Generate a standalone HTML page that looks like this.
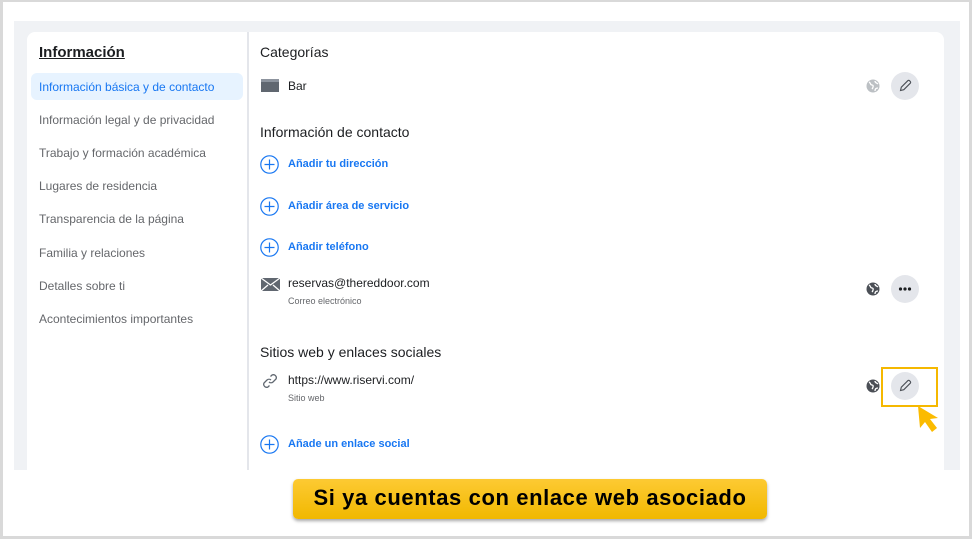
<!DOCTYPE html>
<html><head><meta charset="utf-8"><style>
*{margin:0;padding:0;box-sizing:border-box}
body{width:974px;height:542px;background:#fff;font-family:"Liberation Sans",Arial,sans-serif;position:relative;overflow:hidden}
.frame{position:absolute;left:0;top:0;width:972px;height:539px;border:3px solid #d9d9d9;border-top-width:2px}
.panel{position:absolute;left:14px;top:21px;width:946px;height:449px;background:#f0f2f5}
.card{position:absolute;left:27px;top:32px;width:917px;height:438px;background:#fff;border-radius:8px 8px 0 0}
.div{position:absolute;left:247px;top:32px;width:2px;height:438px;background:#e4e6eb}
.t{position:absolute;white-space:nowrap}
.side{font-size:12px;color:#65676b;left:39px}
.h{font-size:14px;color:#1c1e21}
.blue{font-size:11px;color:#1877f2;font-weight:bold;left:288px}
.plus{position:absolute;left:260px}
.btn{position:absolute;left:891px;width:28px;height:28px;border-radius:50%;background:#e4e6eb}
.globe{position:absolute;left:866px}
</style></head><body>
<div class="frame"></div>
<div class="panel"></div>
<div class="card"></div>
<div class="div"></div>
<div class="t" style="left:39px;top:44px;font-size:15px;font-weight:bold;color:#1c1e21;text-decoration:underline">Información</div>
<div style="position:absolute;left:31px;top:73px;width:212px;height:27px;background:#e7f3ff;border-radius:6px"></div>
<div class="t side" style="top:80px;color:#1877f2">Información básica y de contacto</div>
<div class="t side" style="top:113px">Información legal y de privacidad</div>
<div class="t side" style="top:146px">Trabajo y formación académica</div>
<div class="t side" style="top:179px">Lugares de residencia</div>
<div class="t side" style="top:212px">Transparencia de la página</div>
<div class="t side" style="top:246px">Familia y relaciones</div>
<div class="t side" style="top:279px">Detalles sobre ti</div>
<div class="t side" style="top:312px">Acontecimientos importantes</div>

<div class="t h" style="left:260px;top:44px">Categorías</div>
<div style="position:absolute;left:261px;top:79px;width:18px;height:13px;background:#606770;border-top:3px solid #8d949e"></div>
<div class="t" style="left:288px;top:79px;font-size:12px;color:#1c1e21">Bar</div>
<svg class="globe" style="top:79px" width="14" height="14" viewBox="0 0 14 14"><circle cx="7" cy="7" r="6.5" fill="#bcc0c4"/><path d="M3 3c2 1 1 3 3 3s1 3 0 4M9 2c0 2 2 2 3 3M9 12c0-2 1-3 3-3" stroke="#fff" stroke-width="1.3" fill="none"/></svg>
<div class="btn" style="top:72px"><svg width="28" height="28" viewBox="0 0 28 28"><path d="M9.5 18.5l.8-3.3 6.5-6.5a1.2 1.2 0 0 1 1.7 0l.8.8a1.2 1.2 0 0 1 0 1.7l-6.5 6.5z" fill="none" stroke="#4b4f56" stroke-width="1.1"/></svg></div>

<div class="t h" style="left:260px;top:124px">Información de contacto</div>
<svg class="plus" style="top:155px" width="19" height="19" viewBox="0 0 19 19"><circle cx="9.5" cy="9.5" r="8.7" fill="none" stroke="#1877f2" stroke-width="1.2"/><path d="M9.5 4.5v10M4.5 9.5h10" stroke="#1877f2" stroke-width="1.2"/></svg><div class="t blue" style="top:158px">Añadir tu dirección</div>
<svg class="plus" style="top:197px" width="19" height="19" viewBox="0 0 19 19"><circle cx="9.5" cy="9.5" r="8.7" fill="none" stroke="#1877f2" stroke-width="1.2"/><path d="M9.5 4.5v10M4.5 9.5h10" stroke="#1877f2" stroke-width="1.2"/></svg><div class="t blue" style="top:200px">Añadir área de servicio</div>
<svg class="plus" style="top:238px" width="19" height="19" viewBox="0 0 19 19"><circle cx="9.5" cy="9.5" r="8.7" fill="none" stroke="#1877f2" stroke-width="1.2"/><path d="M9.5 4.5v10M4.5 9.5h10" stroke="#1877f2" stroke-width="1.2"/></svg><div class="t blue" style="top:241px">Añadir teléfono</div>

<svg style="position:absolute;left:261px;top:278px" width="19" height="13" viewBox="0 0 19 13"><rect width="19" height="13" fill="#606770"/><path d="M0 0l9.5 7L19 0M0 13l7-6M19 13l-7-6" stroke="#fff" stroke-width="1.3" fill="none"/></svg>
<div class="t" style="left:288px;top:276px;font-size:12px;color:#1c1e21">reservas@thereddoor.com</div>
<div class="t" style="left:288px;top:296px;font-size:9px;color:#65676b">Correo electrónico</div>
<svg class="globe" style="top:282px" width="14" height="14" viewBox="0 0 14 14"><circle cx="7" cy="7" r="6.5" fill="#4b4f56"/><path d="M3 3c2 1 1 3 3 3s1 3 0 4M9 2c0 2 2 2 3 3M9 12c0-2 1-3 3-3" stroke="#fff" stroke-width="1.3" fill="none"/></svg>
<div class="btn" style="top:275px"><svg width="28" height="28" viewBox="0 0 28 28"><circle cx="9.5" cy="14" r="1.6" fill="#1c1e21"/><circle cx="14" cy="14" r="1.6" fill="#1c1e21"/><circle cx="18.5" cy="14" r="1.6" fill="#1c1e21"/></svg></div>

<div class="t h" style="left:260px;top:344px">Sitios web y enlaces sociales</div>
<svg style="position:absolute;left:261px;top:372px" width="18" height="18" viewBox="0 0 18 18"><path d="M8 10a3 3 0 0 0 4 0l3-3a3 3 0 0 0-4-4l-1.5 1.5M10 8a3 3 0 0 0-4 0l-3 3a3 3 0 0 0 4 4l1.5-1.5" fill="none" stroke="#606770" stroke-width="1.3"/></svg>
<div class="t" style="left:288px;top:373px;font-size:12px;color:#1c1e21">https://www.riservi.com/</div>
<div class="t" style="left:288px;top:393px;font-size:9px;color:#65676b">Sitio web</div>
<svg class="globe" style="top:379px" width="14" height="14" viewBox="0 0 14 14"><circle cx="7" cy="7" r="6.5" fill="#4b4f56"/><path d="M3 3c2 1 1 3 3 3s1 3 0 4M9 2c0 2 2 2 3 3M9 12c0-2 1-3 3-3" stroke="#fff" stroke-width="1.3" fill="none"/></svg>
<div class="btn" style="top:372px"><svg width="28" height="28" viewBox="0 0 28 28"><path d="M9.5 18.5l.8-3.3 6.5-6.5a1.2 1.2 0 0 1 1.7 0l.8.8a1.2 1.2 0 0 1 0 1.7l-6.5 6.5z" fill="none" stroke="#4b4f56" stroke-width="1.1"/></svg></div>
<div style="position:absolute;left:881px;top:367px;width:57px;height:40px;border:2.5px solid #f5b800"></div>
<svg style="position:absolute;left:914px;top:405px" width="30" height="32" viewBox="0 0 30 32"><path d="M4 1l2 22 5-6 7 10 5-4-7-9 8-1z" fill="#fbbb00"/></svg>

<svg class="plus" style="top:435px" width="19" height="19" viewBox="0 0 19 19"><circle cx="9.5" cy="9.5" r="8.7" fill="none" stroke="#1877f2" stroke-width="1.2"/><path d="M9.5 4.5v10M4.5 9.5h10" stroke="#1877f2" stroke-width="1.2"/></svg><div class="t blue" style="top:438px">Añade un enlace social</div>

<div style="position:absolute;left:293px;top:479px;width:474px;height:40px;border-radius:5px;background:linear-gradient(#fdca33,#f1b800);box-shadow:0 2px 3px rgba(0,0,0,.35)"></div>
<div class="t" style="left:293px;top:485px;width:474px;text-align:center;font-size:22px;font-weight:bold;color:#000;letter-spacing:0.6px">Si ya cuentas con enlace web asociado</div>
</body></html>
